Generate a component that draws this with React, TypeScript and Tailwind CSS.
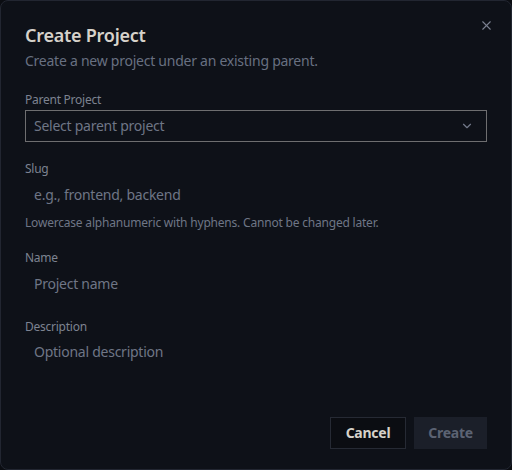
import { X, ChevronDown } from "lucide-react";

export default function App() {
  return (
    <main
      className="h-[470px] w-[512px] bg-[#0b0d12]"
      style={{ fontFamily: '"Noto Sans", "Open Sans", sans-serif' }}
    >
      <div className="relative flex h-full flex-col rounded-lg border border-[#222631] bg-[#0e1118] px-6 pt-[22px] pb-[20px] tracking-[-0.25px]">
        <button className="absolute right-[17px] top-[17px] text-[#7b8190]">
          <X size={15} strokeWidth={1.75} />
        </button>

        <h2 className="text-lg font-semibold leading-6 text-[#d6d2ca]">
          Create Project
        </h2>
        <p className="mt-1 text-sm leading-5 text-[#687081]">
          Create a new project under an existing parent.
        </p>

        <div className="mt-[21px] flex flex-col">
          <label className="text-xs leading-4 text-[#7d8391]">Parent Project</label>
          <div className="mt-[2px] flex h-8 items-center justify-between border border-[#6e6e70] pl-2 pr-3">
            <span className="text-sm text-[#6f7686]">Select parent project</span>
            <ChevronDown size={14} className="text-[#737a8a]" />
          </div>
        </div>

        <div className="mt-[19px] flex flex-col">
          <label className="text-xs leading-4 text-[#7d8391]">Slug</label>
          <input
            className="mt-[1px] h-8 border border-transparent bg-transparent px-2 text-sm tracking-[-0.25px] text-[#d6d2ca] outline-none placeholder:text-[#6f7686]"
            placeholder="e.g., frontend, backend"
          />
          <p className="mt-[5px] text-xs leading-4 tracking-[-0.2px] text-[#6f7686]">
            Lowercase alphanumeric with hyphens. Cannot be changed later.
          </p>
        </div>

        <div className="mt-[19px] flex flex-col">
          <label className="text-xs leading-4 text-[#7d8391]">Name</label>
          <input
            className="mt-[1px] h-8 border border-transparent bg-transparent px-2 text-sm tracking-[-0.25px] text-[#d6d2ca] outline-none placeholder:text-[#6f7686]"
            placeholder="Project name"
          />
        </div>

        <div className="mt-[20px] flex flex-col">
          <label className="text-xs leading-4 text-[#7d8391]">Description</label>
          <input
            className="mt-0 h-8 border border-transparent bg-transparent px-2 text-sm tracking-[-0.25px] text-[#d6d2ca] outline-none placeholder:text-[#6f7686]"
            placeholder="Optional description"
          />
        </div>

        <div className="mt-auto flex justify-end gap-2">
          <button className="h-8 w-[76px] border border-[#262a34] bg-[#0b0d12] text-sm font-bold text-[#d6d2ca]">
            Cancel
          </button>
          <button className="h-8 w-[73px] bg-[#1b1f29] text-sm font-bold text-[#5c6373]">
            Create
          </button>
        </div>
      </div>
    </main>
  );
}
